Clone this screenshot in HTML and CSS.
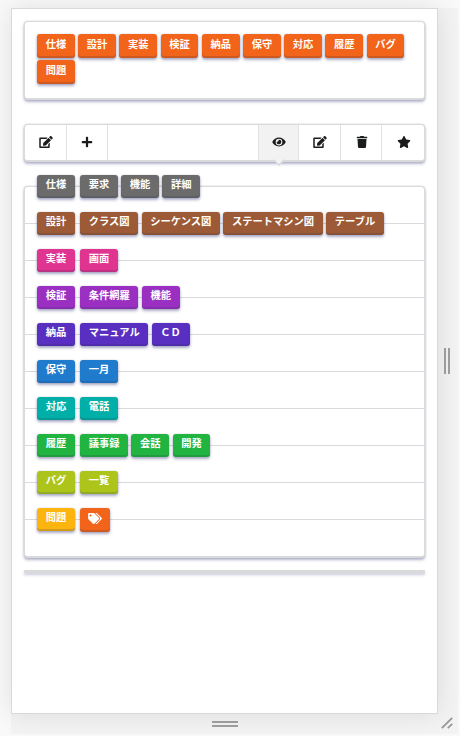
FILE: index.html
```
<!DOCTYPE html>
<html lang="ja">
<head>
<meta charset="utf-8">
<title>タグ</title>
<link rel="stylesheet" href="styles.css">
</head>
<body>
<svg class="defs" aria-hidden="true">
  <symbol id="edit" viewBox="0 0 576 512"><path d="M402.6 83.200l90.200 90.200c3.800 3.800 3.800 10 0 13.800L274.400 405.600l-92.800 10.300c-12.400 1.400-22.900-9.100-21.500-21.500l10.300-92.800L388.800 83.200c3.800-3.800 10-3.800 13.800 0zm162-22.900l-48.800-48.800c-15.200-15.200-39.900-15.200-55.200 0l-35.400 35.400c-3.800 3.800-3.800 10 0 13.800l90.200 90.200c3.800 3.800 10 3.800 13.800 0l35.400-35.400c15.200-15.300 15.200-40 0-55.200zM384 346.200V448H64V128h229.800c3.200 0 6.200-1.300 8.500-3.500l40-40c7.600-7.600 2.200-20.500-8.500-20.500H48C21.500 64 0 85.500 0 112v352c0 26.500 21.500 48 48 48h352c26.500 0 48-21.500 48-48V306.200c0-10.700-12.900-16-20.500-8.500l-40 40c-2.200 2.300-3.500 5.300-3.500 8.500z"/></symbol>
  <symbol id="plus" viewBox="0 0 448 512"><path d="M416 208H272V64c0-17.700-14.300-32-32-32h-32c-17.700 0-32 14.300-32 32v144H32c-17.700 0-32 14.300-32 32v32c0 17.700 14.300 32 32 32h144v144c0 17.700 14.300 32 32 32h32c17.700 0 32-14.300 32-32V304h144c17.700 0 32-14.300 32-32v-32c0-17.700-14.300-32-32-32z"/></symbol>
  <symbol id="eye" viewBox="0 0 576 512"><path d="M572.500 241.400C518.300 135.600 410.900 64 288 64S57.700 135.600 3.500 241.400a32.400 32.400 0 0 0 0 29.200C57.700 376.400 165.100 448 288 448s230.300-71.600 284.500-177.400a32.400 32.400 0 0 0 0-29.200zM288 400a144 144 0 1 1 144-144 143.900 143.900 0 0 1-144 144zm0-240a95.300 95.300 0 0 0-25.300 3.800 47.900 47.900 0 0 1-66.900 66.900A95.800 95.800 0 1 0 288 160z"/></symbol>
  <symbol id="trash" viewBox="0 0 448 512"><path d="M432 32H312l-9.400-18.700A24 24 0 0 0 281.100 0H166.800a23.700 23.700 0 0 0-21.400 13.300L136 32H16A16 16 0 0 0 0 48v32a16 16 0 0 0 16 16h416a16 16 0 0 0 16-16V48a16 16 0 0 0-16-16zM53.200 467a48 48 0 0 0 47.900 45h245.800a48 48 0 0 0 47.900-45L416 128H32z"/></symbol>
  <symbol id="star" viewBox="0 0 576 512"><path d="M259.300 17.800L194 150.200 47.900 171.500c-26.200 3.800-36.700 36.100-17.700 54.600l105.700 103-25 145.500c-4.500 26.300 23.200 46 46.400 33.700L288 439.600l130.700 68.700c23.200 12.200 50.900-7.400 46.400-33.700l-25-145.500 105.700-103c19-18.500 8.500-50.800-17.700-54.600L382 150.200 316.700 17.800c-11.700-23.600-45.600-23.900-57.400 0z"/></symbol>
  <symbol id="tags" viewBox="0 0 640 512"><path d="M497.900 225.900L286.100 14.100A48 48 0 0 0 252.100 0H48C21.500 0 0 21.500 0 48v204.100a48 48 0 0 0 14.100 33.900l211.800 211.800c18.700 18.700 49.100 18.700 67.900 0l204.100-204.100c18.700-18.700 18.700-49.100 0-67.800zM112 160c-26.500 0-48-21.500-48-48s21.500-48 48-48 48 21.500 48 48-21.500 48-48 48zm513.900 133.800L421.800 497.900c-18.700 18.700-49.100 18.700-67.900 0l-.4-.4L527.600 323.500c17-17 26.400-39.600 26.400-63.600s-9.400-46.600-26.400-63.600L331.400 0h48.700a48 48 0 0 1 33.900 14.100l211.800 211.800c18.800 18.700 18.800 49.100.1 67.900z"/></symbol>
</svg>
<div class="stage">
  <main class="frame">
    <section class="segment tags">
      <span class="label">仕様</span><span class="label">設計</span><span class="label">実装</span><span class="label">検証</span><span class="label">納品</span><span class="label">保守</span><span class="label">対応</span><span class="label">履歴</span><span class="label">バグ</span><span class="label">問題</span>
    </section>
    <nav class="segment menu">
      <a class="item"><svg><use href="#edit"/></svg></a>
      <a class="item"><svg><use href="#plus"/></svg></a>
      <a class="item push active"><svg><use href="#eye"/></svg></a>
      <a class="item"><svg><use href="#edit"/></svg></a>
      <a class="item"><svg><use href="#trash"/></svg></a>
      <a class="item last"><svg><use href="#star"/></svg></a>
    </nav>
    <section class="segment groups">
      <div class="row grey"><span class="label">仕様</span><span class="label">要求</span><span class="label">機能</span><span class="label">詳細</span></div>
      <div class="row brown"><span class="label">設計</span><span class="label">クラス図</span><span class="label">シーケンス図</span><span class="label">ステートマシン図</span><span class="label">テーブル</span></div>
      <div class="row pink"><span class="label">実装</span><span class="label">画面</span></div>
      <div class="row purple"><span class="label">検証</span><span class="label">条件網羅</span><span class="label">機能</span></div>
      <div class="row violet"><span class="label">納品</span><span class="label">マニュアル</span><span class="label">ＣＤ</span></div>
      <div class="row blue"><span class="label">保守</span><span class="label">一月</span></div>
      <div class="row teal"><span class="label">対応</span><span class="label">電話</span></div>
      <div class="row green"><span class="label">履歴</span><span class="label">議事録</span><span class="label">会話</span><span class="label">開発</span></div>
      <div class="row olive"><span class="label">バグ</span><span class="label">一覧</span></div>
      <div class="row yellow"><span class="label">問題</span><span class="label add"><svg><use href="#tags"/></svg></span></div>
    </section>
    <div class="bar"></div>
  </main>
  <div class="handle side"><i></i></div>
  <div class="handle bottom"><i></i></div>
  <div class="handle corner"><svg viewBox="0 0 12 12"><path d="M.8 11.200L11.200.8M6.800 11.200L11.200 6.800"/></svg></div>
</div>
</body>
</html>
```

FILE: styles.css
```
* { box-sizing: border-box; }
body {
  margin: 0;
  height: 736px;
  overflow: hidden;
  background: #f9f9f9;
  font-family: "Noto Sans CJK JP", sans-serif;
}
.defs { display: none; }
.stage {
  display: grid;
  grid-template-columns: 427px 20px;
  grid-template-rows: 706px 20px;
  padding: 8px 0 0 11px;
}
.frame {
  border: 1px solid #d9d9d9;
  background: #fff;
  padding: 12px;
  box-shadow: 0 0 24px rgba(0, 0, 0, .1);
  z-index: 1;
}
.segment {
  width: 401px;
  border: 1px solid #d9dadb;
  border-bottom-width: 2px;
  border-radius: 4px;
  background: #fff;
  box-shadow: 0 2px 3px rgba(40, 45, 110, .34), 0 0 2px rgba(40, 45, 110, .2);
}
.tags {
  height: 79px;
  padding: 12px;
  display: flex;
  flex-wrap: wrap;
  align-content: flex-start;
  gap: 2px 3.4px;
}
.label {
  --c: #f26419;
  display: block;
  height: 24px;
  padding: 0 8.65px;
  border-radius: 3px;
  background: var(--c);
  color: #fff;
  font-size: 10.285px;
  font-weight: 700;
  line-height: 20px;
  white-space: nowrap;
  box-shadow: inset 0 -2px 0 rgba(40, 45, 70, .18), 0 2px 3px rgba(40, 45, 110, .38), 0 0 2px rgba(40, 45, 110, .2);
}
.menu {
  height: 38px;
  margin-top: 24px;
  display: flex;
}
.item {
  position: relative;
  width: 41.6px;
  border-right: 1px solid #e2e2e3;
  display: flex;
  align-items: center;
  justify-content: center;
}
.item svg { width: 14px; height: 12px; margin: 0 0 1px 1px; fill: #1b1c1d; }
.push { margin-left: auto; border-left: 1px solid #e2e2e3; }
.last { border-right: 0; }
.active { background: #f2f2f2; }
.active::after {
  content: "";
  position: absolute;
  left: 16px;
  bottom: -4px;
  width: 7px;
  height: 7px;
  background: #f2f2f2;
  border: solid #d4d4d5;
  border-width: 0 1px 1px 0;
  transform: rotate(45deg);
}
.groups { height: 372px; margin-top: 24px; }
.row {
  height: 37px;
  border-top: 1px solid #d9dadb;
  display: flex;
  gap: 3.4px;
  padding-left: 12px;
}
.row:first-child { border-top-color: transparent; margin-top: -1px; }
.row .label { height: 23px; margin-top: -12px; line-height: 17px; background: var(--row); }
.row .label:first-child { margin-right: 1.8px; }
.row .add { height: 24px; width: 30px; background: #f26419; padding: 5px 8px; }
.add svg { display: block; width: 14px; height: 11px; fill: #fff; }
.grey { --row: #6b6b6b; }
.brown { --row: #9c5b36; }
.pink { --row: #df3490; }
.purple { --row: #9a2fc1; }
.violet { --row: #592fc1; }
.blue { --row: #207bcd; }
.teal { --row: #00afa7; }
.green { --row: #22b440; }
.olive { --row: #adc51b; }
.yellow { --row: #fcb50f; }
.bar {
  width: 401px;
  height: 3px;
  margin-top: 12px;
  background: #d9dadb;
  box-shadow: 0 2px 3px rgba(40, 45, 110, .25);
}
.handle { background: #f3f3f3; display: flex; align-items: center; justify-content: center; }
.side i { width: 6px; height: 26px; margin-right: 2px; border: solid #a0a0a0; border-width: 0 2px; }
.bottom i { width: 26px; height: 6px; margin-bottom: 1px; border: solid #a0a0a0; border-width: 2px 0; }
.corner svg { width: 12px; height: 12px; margin: 0 3px 3px 0; fill: none; stroke: #999; stroke-width: 1.8; }
```
